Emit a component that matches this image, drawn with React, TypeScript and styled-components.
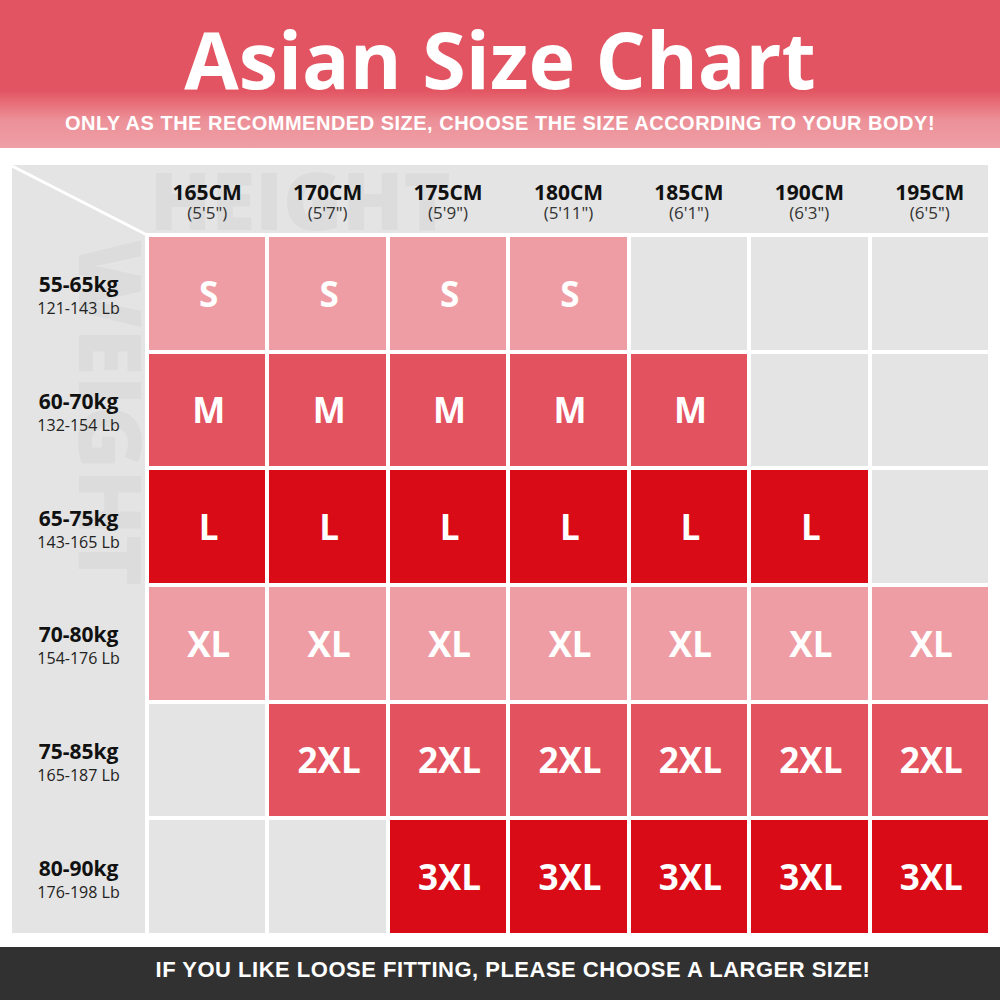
import React from "react";
import styled, { createGlobalStyle } from "styled-components";

const Global = createGlobalStyle`
  html, body { margin: 0; padding: 0; background: #fff; }
  * { box-sizing: border-box; }
`;

type Tone = "s" | "m" | "l" | "none";

const toneColor: Record<Tone, string> = {
  s: "#ef9da4",
  m: "#e3525f",
  l: "#d80b17",
  none: "#e4e4e4",
};

const Page = styled.div`
  width: 1000px;
  height: 1000px;
  background: #fff;
  display: flex;
  flex-direction: column;
  overflow: hidden;
`;

const Banner = styled.header`
  height: 148px;
  background: linear-gradient(
    to bottom,
    #e25461 0px,
    #e25461 90px,
    #ec9098 120px,
    #ef9fa6 148px
  );
  display: flex;
  flex-direction: column;
  align-items: center;
  padding-top: 19px;
`;

const Title = styled.h1`
  margin: 0;
  font-family: "Open Sans", sans-serif;
  font-weight: 700;
  font-size: 79px;
  line-height: 79px;
  color: #fff;
`;

const Subtitle = styled.p`
  margin: 15px 0 0;
  font-family: "Liberation Sans", Arial, sans-serif;
  font-weight: 700;
  font-size: 20px;
  line-height: 20px;
  color: #fff;
  letter-spacing: 0.5px;
`;

const Chart = styled.section`
  margin: 17px 12px 0;
  height: 768px;
  display: grid;
  grid-template-columns: 133px 1fr;
  grid-template-rows: 68px 700px;
  background: #e4e4e4;
  position: relative;
`;

const Corner = styled.div`
  grid-area: 1 / 1;
  position: relative;
`;

const Diagonal = styled.svg`
  position: absolute;
  left: 0;
  top: 0;
  overflow: visible;
`;

const HeadRow = styled.div`
  grid-area: 1 / 2;
  display: grid;
  grid-template-columns: repeat(7, 1fr);
  column-gap: 4px;
  padding-left: 4px;
  position: relative;
  overflow: hidden;
`;

const Watermark = styled.span`
  position: absolute;
  font-family: "Open Sans", sans-serif;
  font-weight: 800;
  line-height: 0.75;
  color: #dcdcdc;
  white-space: nowrap;
  z-index: 0;
  pointer-events: none;
`;

const HeightMark = styled(Watermark)`
  font-size: 80px;
  left: 5px;
  top: 4px;
`;

const WeightMark = styled(Watermark)`
  font-size: 86px;
  left: 132px;
  top: 6px;
  transform-origin: 0 0;
  transform: rotate(90deg);
`;

const ColHead = styled.div`
  position: relative;
  z-index: 1;
  display: flex;
  flex-direction: column;
  align-items: center;
  justify-content: center;
  padding-top: 5px;
  font-family: "Open Sans", sans-serif;
`;

const Cm = styled.span`
  font-weight: 700;
  font-size: 21px;
  line-height: 22px;
  color: #111;
`;

const Ft = styled.span`
  font-weight: 400;
  font-size: 17px;
  line-height: 20px;
  color: #333;
`;

const Labels = styled.div`
  grid-area: 2 / 1;
  display: grid;
  grid-template-rows: repeat(6, 1fr);
  row-gap: 4px;
  padding-top: 4px;
  position: relative;
  overflow: hidden;
`;

const RowLabel = styled.div`
  position: relative;
  z-index: 1;
  display: flex;
  flex-direction: column;
  align-items: center;
  justify-content: center;
  padding-top: 4px;
  font-family: "Open Sans", sans-serif;
`;

const Kg = styled.span`
  font-weight: 700;
  font-size: 21px;
  line-height: 26px;
  color: #111;
`;

const Lb = styled.span`
  font-weight: 400;
  font-size: 16px;
  line-height: 22px;
  color: #222;
`;

const Body = styled.div`
  grid-area: 2 / 2;
  background: #fff;
  padding: 4px 0 0 4px;
  display: grid;
  grid-template-columns: repeat(7, 1fr);
  grid-template-rows: repeat(6, 1fr);
  gap: 4px;
`;

const Cell = styled.div<{ $tone: Tone }>`
  background: ${(p) => toneColor[p.$tone]};
  display: flex;
  align-items: center;
  justify-content: center;
  color: #fff;
  font-family: "Open Sans", sans-serif;
  font-weight: 700;
  font-size: 35px;
  line-height: 1;
  padding-left: 3px;
`;

const Footer = styled.footer`
  margin-top: 14px;
  height: 53px;
  background: #313131;
  display: flex;
  align-items: center;
  justify-content: center;
  padding: 0 0 8px 26px;
  font-family: "Liberation Sans", Arial, sans-serif;
  font-weight: 700;
  font-size: 22px;
  letter-spacing: 0.5px;
  color: #fff;
`;

const heights = [
  ["165CM", "(5'5\")"],
  ["170CM", "(5'7\")"],
  ["175CM", "(5'9\")"],
  ["180CM", "(5'11\")"],
  ["185CM", "(6'1\")"],
  ["190CM", "(6'3\")"],
  ["195CM", "(6'5\")"],
];

const weights = [
  ["55-65kg", "121-143 Lb"],
  ["60-70kg", "132-154 Lb"],
  ["65-75kg", "143-165 Lb"],
  ["70-80kg", "154-176 Lb"],
  ["75-85kg", "165-187 Lb"],
  ["80-90kg", "176-198 Lb"],
];

const rows: { size: string; tone: Tone; from: number; to: number }[] = [
  { size: "S", tone: "s", from: 0, to: 3 },
  { size: "M", tone: "m", from: 0, to: 4 },
  { size: "L", tone: "l", from: 0, to: 5 },
  { size: "XL", tone: "s", from: 0, to: 6 },
  { size: "2XL", tone: "m", from: 1, to: 6 },
  { size: "3XL", tone: "l", from: 2, to: 6 },
];

export default function App() {
  return (
    <Page>
      <Global />
      <Banner>
        <Title>Asian Size Chart</Title>
        <Subtitle>
          ONLY AS THE RECOMMENDED SIZE, CHOOSE THE SIZE ACCORDING TO YOUR BODY!
        </Subtitle>
      </Banner>
      <Chart>
        <Corner>
          <Diagonal width="137" height="72" viewBox="0 0 137 72">
            <line x1="0" y1="1" x2="137" y2="71" stroke="#fff" strokeWidth="3" />
          </Diagonal>
        </Corner>
        <HeadRow>
          <HeightMark aria-hidden="true">HEIGHT</HeightMark>
          {heights.map(([cm, ft]) => (
            <ColHead key={cm}>
              <Cm>{cm}</Cm>
              <Ft>{ft}</Ft>
            </ColHead>
          ))}
        </HeadRow>
        <Labels>
          <WeightMark aria-hidden="true">WEIGHT</WeightMark>
          {weights.map(([kg, lb]) => (
            <RowLabel key={kg}>
              <Kg>{kg}</Kg>
              <Lb>{lb}</Lb>
            </RowLabel>
          ))}
        </Labels>
        <Body>
          {rows.map((r, ri) =>
            heights.map((_, ci) => {
              const on = ci >= r.from && ci <= r.to;
              return (
                <Cell key={`${ri}-${ci}`} $tone={on ? r.tone : "none"}>
                  {on ? r.size : ""}
                </Cell>
              );
            })
          )}
        </Body>
      </Chart>
      <Footer>IF YOU LIKE LOOSE FITTING, PLEASE CHOOSE A LARGER SIZE!</Footer>
    </Page>
  );
}
